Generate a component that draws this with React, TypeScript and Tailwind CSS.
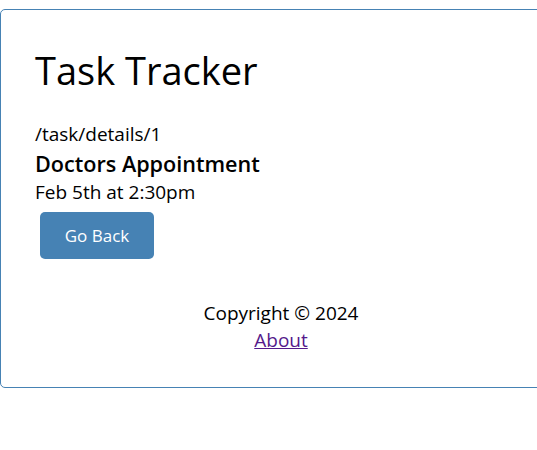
import React from "react";

export default function App() {
  return (
    <div
      className="min-h-[450px] bg-white text-black overflow-hidden"
      style={{ fontFamily: '"Open Sans", "Liberation Sans", sans-serif' }}
    >
      <div className="mt-[9px] w-[562px] rounded-[5px] border border-[#4682b4] px-[34px] pt-[37px] pb-[33px]">
        <header className="flex items-center justify-between">
          <h1 className="text-[38px] leading-[46px] font-normal">Task Tracker</h1>
        </header>
        <div className="mt-[27px]">
          <p className="text-[19px] leading-[29px]">/task/details/1</p>
          <h3 className="text-[21.6px] leading-[29px] font-semibold">Doctors Appointment</h3>
          <p className="text-[19px] leading-[29px]">Feb 5th at 2:30pm</p>
          <button className="m-[5px] mb-0 h-[47px] w-[114px] rounded-[5px] bg-[#4682b4] text-[17px] text-white">
            Go Back
          </button>
        </div>
        <footer className="mt-[41px] text-center text-[19px] leading-[27px]">
          <p>Copyright © 2024</p>
          <a href="#" className="text-[#551a8b] underline">
            About
          </a>
        </footer>
      </div>
    </div>
  );
}
